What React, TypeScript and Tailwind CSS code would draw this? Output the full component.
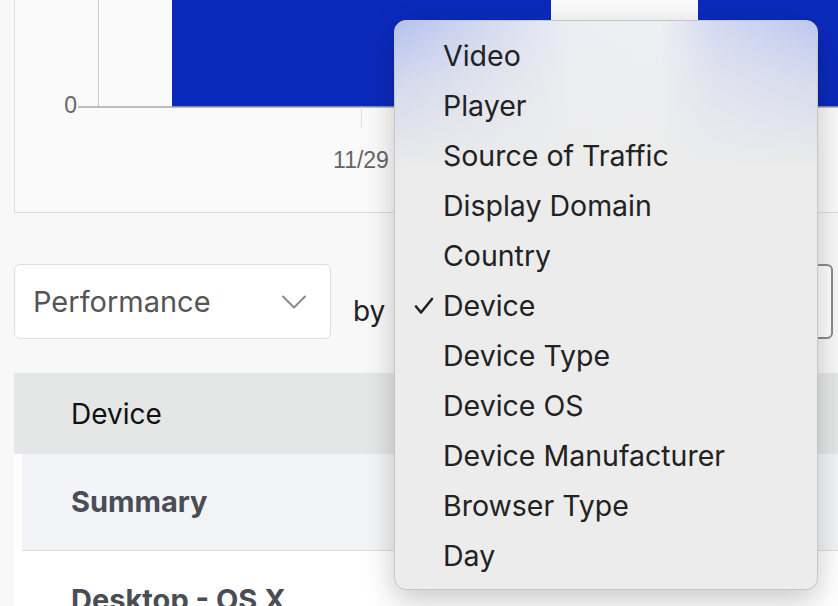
import { ChevronDown } from "lucide-react";

const menuItems = [
  "Video",
  "Player",
  "Source of Traffic",
  "Display Domain",
  "Country",
  "Device",
  "Device Type",
  "Device OS",
  "Device Manufacturer",
  "Browser Type",
  "Day",
];

const selected = "Device";

function Chart() {
  return (
    <div className="ml-[14px] h-[213px] w-[900px] border-x border-b border-[#dddddd] bg-[#fafafa]">
      <svg width="900" height="212" className="block">
        <line x1="83.5" y1="0" x2="83.5" y2="107" stroke="#cccccc" strokeWidth="1" />
        <rect x="157" y="0" width="379" height="107" fill="#0b2abb" />
        <rect x="683" y="0" width="220" height="107" fill="#0b2abb" />
        <line x1="63" y1="107" x2="900" y2="107" stroke="#aaaaaa" strokeWidth="1.5" />
        <line x1="346.5" y1="107" x2="346.5" y2="127" stroke="#dddddd" strokeWidth="1" />
        <text
          x="62"
          y="113"
          textAnchor="end"
          fontFamily="Liberation Sans, Arial, sans-serif"
          fontSize="23"
          fill="#666666"
        >
          0
        </text>
        <text
          x="346"
          y="168"
          textAnchor="middle"
          fontFamily="Liberation Sans, Arial, sans-serif"
          fontSize="23"
          fill="#666666"
        >
          11/29
        </text>
      </svg>
    </div>
  );
}

function Check() {
  return (
    <svg width="20" height="18" viewBox="0 0 20 18" className="block">
      <polyline
        points="2,9.5 7,15.5 18,2"
        fill="none"
        stroke="#222222"
        strokeWidth="2.6"
        strokeLinecap="round"
        strokeLinejoin="round"
      />
    </svg>
  );
}

// opaque menu; the blurred blue of the bars behind it is painted as gradients
function DimensionMenu() {
  return (
    <div className="absolute left-[394px] top-[20px] h-[570px] w-[424px] rounded-[12px] border border-[#c6c6c6] bg-[#ececec] bg-[linear-gradient(to_bottom,rgba(236,236,236,0)_0px,rgba(236,236,236,0.55)_60px,#ececec_150px),linear-gradient(to_right,#b4c1ee_0px,#d2d9f0_90px,#eceef3_175px,#eef0f4_265px,#d2d9f1_320px,#bcc8f0_424px)] bg-no-repeat py-[10px] shadow-[0_10px_30px_rgba(0,0,0,0.22)]">
      {menuItems.map((item) => (
        <div key={item} className="flex h-[50px] items-center text-[28.5px] text-[#222222]">
          <div className="flex w-[48px] justify-end pr-[9px]">
            {item === selected ? <Check /> : null}
          </div>
          <span className="leading-none">{item}</span>
        </div>
      ))}
    </div>
  );
}

export default function App() {
  return (
    <div className="relative h-[606px] w-[838px] overflow-hidden bg-[#f8f8f8] font-['Inter','Noto_Sans',sans-serif]">
      <Chart />

      <div className="mt-[51px] flex h-[75px] items-center">
        <div className="ml-[14px] flex h-[75px] w-[317px] shrink-0 items-center justify-between rounded-[6px] border border-[#dddddd] bg-white pl-[18px] pr-[14px]">
          <span className="text-[29px] text-[#555555]">Performance</span>
          <ChevronDown className="h-[44px] w-[44px] text-[#8a8a8a]" strokeWidth={1.1} />
        </div>
        <span className="ml-[22px] mt-[18px] text-[28px] text-[#222222]">by</span>
        <div className="ml-[14px] mr-[5px] h-[75px] flex-1 rounded-[6px] border-2 border-[#8c8c8c] bg-white" />
      </div>

      <div className="ml-[14px] mt-[34px] flex h-[81px] w-[900px] items-center bg-[#e5e6e6] pl-[57px]">
        <span className="text-[28px] text-[#111111]">Device</span>
      </div>
      <div className="ml-[14px] w-[900px] bg-white pl-[8px]">
        <div className="flex h-[97px] items-center border-b border-[#dddddd] bg-[#f3f4f7] pl-[49px]">
          <span className="text-[29px] font-bold text-[#4a4d55]">Summary</span>
        </div>
        <div className="flex h-[97px] items-center pl-[49px]">
          <span className="text-[29px] font-bold text-[#4a4d55]">Desktop - OS X</span>
        </div>
      </div>

      <DimensionMenu />
    </div>
  );
}
